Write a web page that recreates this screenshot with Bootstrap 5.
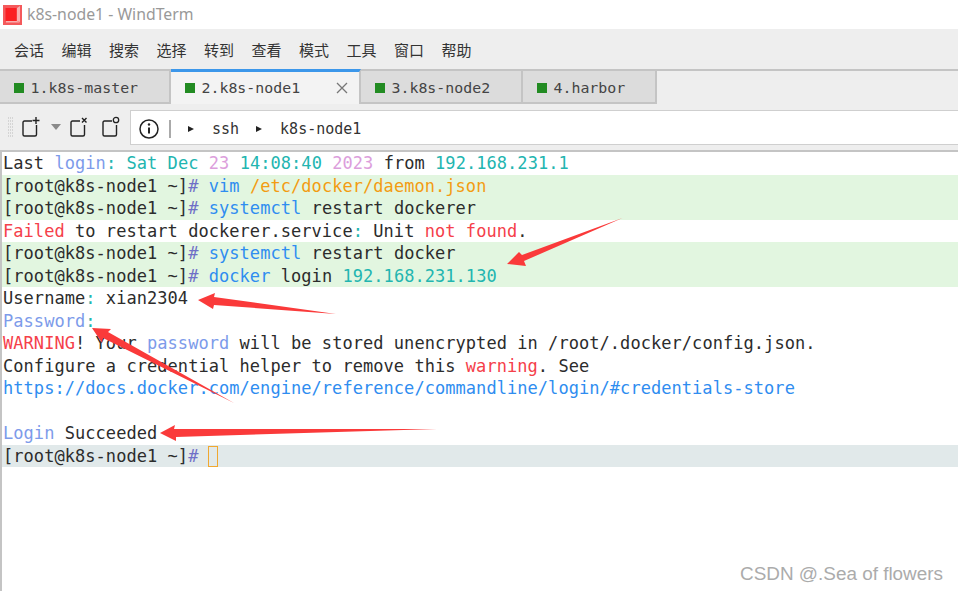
<!DOCTYPE html>
<html lang="zh">
<head>
<meta charset="utf-8">
<title>k8s-node1 - WindTerm</title>
<link rel="stylesheet" href="https://cdn.jsdelivr.net/npm/bootstrap@5.3.0/dist/css/bootstrap.min.css">
<style>
html,body{height:100%;overflow:hidden;background:#fff}
.wt-app{position:relative;width:958px;height:591px;overflow:hidden;font-family:"Noto Sans","Noto Sans CJK SC",sans-serif}
.wt-title{height:29px;gap:5px;padding-left:3px;font-size:15.8px;color:#999;background:#fff}
.wt-menu{height:40px;background:#eee;padding-left:14px;gap:17.500px;font:15px "Noto Sans CJK SC",sans-serif;color:#333}
.wt-menu span{width:30px}
.wt-tabs{height:35px;background:#eee;border-top:2px solid #c4c4c4}
.wt-tab{height:33px;background:#dcdcdc;border-right:2px solid #c4c4c4;border-bottom:2px solid #c4c4c4;font:14.900px "DejaVu Sans Mono",monospace;color:#444;padding:3px 0 0 14px;gap:6.500px}
.wt-tab.wt-on{height:35px;margin-top:-2px;background:#f3f3f3;border-top:3px solid #3c97ea;border-bottom:0;padding-top:0}
.wt-close{margin-left:auto;margin-right:11px}
.wt-sq{width:10px;height:10px;background:#228b22;flex:none}
.wt-tools{height:46px;background:#eee;padding-left:8px}
.wt-btns{width:122px}
.wt-b1{margin-left:9px}
.wt-b2{margin-left:11px}
.wt-b3{margin-left:9px}
.wt-b4{margin-left:14px}
.wt-addr{flex:1;height:35px;margin-top:6px;padding-top:2px;background:#fff;border:1.500px solid #cfcfcf;border-right:0;font:15px "DejaVu Sans Mono",monospace;color:#333}
.wt-sep{width:2px;height:18px;background:#aaa;margin-left:10px}
.wt-step{margin-left:18px}
.wt-arr{margin-left:17px}
.wt-term{height:441px;border-top:2px solid #c4c4c4;border-left:2px solid #c4c4c4;padding-left:1px;font:17px/22.500px "DejaVu Sans Mono",monospace;letter-spacing:.05px;color:#2c2c2c}
.wt-line{height:22.500px;margin-left:-1px;padding-left:1px;white-space:pre}
.wt-g{background:#e2f6e0}
.wt-cur{background:#e1e9ea}
.c-b{color:#2f8df0}.c-l{color:#7d9bea}.c-t{color:#22b5b0}.c-p{color:#dc9edc}.c-o{color:#f39c12}.c-r{color:#f5404a}.c-v{color:#6f6fc7}.c-n{color:#22b5b0}
.wt-caret{display:inline-block;width:10px;height:21px;margin-left:-1px;border:1px solid #f0a830;vertical-align:-5px}
.wt-over{position:absolute;left:0;top:0;pointer-events:none}
.wt-mark{position:absolute;right:15px;top:563px;font:18.900px "Liberation Sans",sans-serif;color:#ababab}
</style>
</head>
<body>
<div class="wt-app">
  <div class="wt-title d-flex align-items-center">
    <svg width="19" height="20" viewBox="0 0 19 20"><rect width="19" height="20" fill="#f4595b"/><rect x="2.500" y="3" width="11" height="13" fill="#fb1f22"/><path d="M14 3l3-2v16l-3-1z" fill="#f9b0b0"/><path d="M3 16h11l3 1.500H3z" fill="#f9b0b0"/></svg>
    <span>k8s-node1 - WindTerm</span>
  </div>
  <div class="wt-menu d-flex align-items-center">
    <span>会话</span><span>编辑</span><span>搜索</span><span>选择</span><span>转到</span><span>查看</span><span>模式</span><span>工具</span><span>窗口</span><span>帮助</span>
  </div>
  <div class="wt-tabs d-flex">
    <div class="wt-tab d-flex align-items-center" style="width:171px"><i class="wt-sq"></i>1.k8s-master</div>
    <div class="wt-tab wt-on d-flex align-items-center" style="width:190px"><i class="wt-sq"></i>2.k8s-node1<svg class="wt-close" width="12" height="12" viewBox="0 0 12 12"><path d="M1 1l10 10M11 1L1 11" stroke="#777" stroke-width="1.300"/></svg></div>
    <div class="wt-tab d-flex align-items-center" style="width:162px"><i class="wt-sq"></i>3.k8s-node2</div>
    <div class="wt-tab d-flex align-items-center" style="width:134px"><i class="wt-sq"></i>4.harbor</div>
  </div>
  <div class="wt-tools d-flex">
    <div class="wt-btns d-flex align-items-center">
      <svg width="5" height="20" viewBox="0 0 5 20"><path d="M0 1h5M0 4h5M0 7h5M0 10h5M0 13h5M0 16h5M0 19h5" stroke="#bbb" stroke-dasharray="1 1"/></svg>
      <svg class="wt-b1" width="18" height="22" viewBox="0 0 18 22"><path d="M10 5H2.500Q1 5 1 6.500V18.500Q1 20 2.500 20H13Q14.500 20 14.500 18.500V9M14 1v7M10.500 4.500h7" fill="none" stroke="#222" stroke-width="1.400"/></svg>
      <svg class="wt-b2" width="10" height="6" viewBox="0 0 10 6"><path d="M0 0h10L5 6z" fill="#8a8a8a"/></svg>
      <svg class="wt-b3" width="18" height="22" viewBox="0 0 18 22"><path d="M10 5H2.500Q1 5 1 6.500V18.500Q1 20 2.500 20H13Q14.500 20 14.500 18.500V9M12 2l4.500 4.500M16.500 2L12 6.500" fill="none" stroke="#222" stroke-width="1.400"/></svg>
      <svg class="wt-b4" width="18" height="22" viewBox="0 0 18 22"><path d="M10 5H2.500Q1 5 1 6.500V18.500Q1 20 2.500 20H13Q14.500 20 14.500 18.500V9" fill="none" stroke="#222" stroke-width="1.400"/><circle cx="14" cy="4" r="2.700" fill="none" stroke="#222" stroke-width="1.300"/></svg>
    </div>
    <div class="wt-addr d-flex align-items-center">
      <svg class="ms-2" width="20" height="20" viewBox="0 0 20 20"><circle cx="10" cy="10" r="9" fill="none" stroke="#222" stroke-width="1.500"/><path d="M10 8.500v6" stroke="#222" stroke-width="2"/><circle cx="10" cy="5.500" r="1.200" fill="#222"/></svg>
      <span class="wt-sep"></span>
      <svg class="wt-arr" width="6" height="8" viewBox="0 0 6 8"><path d="M0 1l6 3-6 3z" fill="#222"/></svg>
      <span class="wt-step">ssh</span>
      <svg class="wt-arr" width="6" height="8" viewBox="0 0 6 8"><path d="M0 1l6 3-6 3z" fill="#222"/></svg>
      <span class="wt-step">k8s-node1</span>
    </div>
  </div>
  <div class="wt-term">
<div class="wt-line">Last <span class="c-l">login</span><span class="c-n">:</span> <span class="c-t">Sat Dec</span> <span class="c-p">23</span> <span class="c-t">14:08:40</span> <span class="c-p">2023</span> from <span class="c-t">192.168.231.1</span></div>
<div class="wt-line wt-g">[root@k8s-node1 ~]<span class="c-v">#</span> <span class="c-b">vim</span> <span class="c-o">/etc/docker/daemon.json</span></div>
<div class="wt-line wt-g">[root@k8s-node1 ~]<span class="c-v">#</span> <span class="c-b">systemctl</span> restart dockerer</div>
<div class="wt-line"><span class="c-r">Failed</span> to restart dockerer.service<span class="c-n">:</span> Unit <span class="c-r">not found</span>.</div>
<div class="wt-line wt-g">[root@k8s-node1 ~]<span class="c-v">#</span> <span class="c-b">systemctl</span> restart docker</div>
<div class="wt-line wt-g">[root@k8s-node1 ~]<span class="c-v">#</span> <span class="c-b">docker</span> login <span class="c-t">192.168.231.130</span></div>
<div class="wt-line">Username<span class="c-n">:</span> xian2304</div>
<div class="wt-line"><span class="c-l">Password</span><span class="c-n">:</span></div>
<div class="wt-line"><span class="c-r">WARNING</span>! Your <span class="c-l">password</span> will be stored unencrypted in /root/.docker/config.json.</div>
<div class="wt-line">Configure a credential helper to remove this <span class="c-r">warning</span>. See</div>
<div class="wt-line c-b">https://docs.docker.com/engine/reference/commandline/login/#credentials-store</div>
<div class="wt-line"> </div>
<div class="wt-line"><span class="c-l">Login</span> Succeeded</div>
<div class="wt-line wt-cur">[root@k8s-node1 ~]<span class="c-v">#</span> <i class="wt-caret"></i></div>
  </div>
  <svg class="wt-over" width="958" height="591" viewBox="0 0 958 591">
    <path d="M622.500 218 L522 255 L519 252 L507 264 L526 266 L524 261Z" fill="#fa3a3a"/>
    <path d="M336 314 L214 297 L215 293 L198 300 L213 309 L214 305Z" fill="#fa3a3a"/>
    <path d="M92 328 L111 329 L108 332 L234 403 L103 338 L102 343Z" fill="#fa3a3a"/>
    <path d="M437 429 L174 429 L175 425 L160 433 L176 441 L176 437Z" fill="#fa3a3a"/>
  </svg>
  <div class="wt-mark">CSDN @.Sea of flowers</div>
</div>
<script src="https://cdn.jsdelivr.net/npm/bootstrap@5.3.0/dist/js/bootstrap.bundle.min.js"></script>
</body>
</html>
